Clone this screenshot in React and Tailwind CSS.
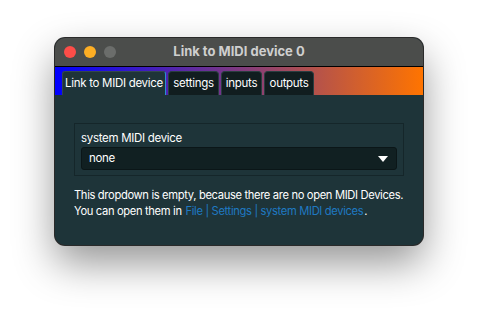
export default function App() {
  return (
    <div className="w-[479px] h-[319px] bg-white relative overflow-hidden" style={{ fontFamily: "Inter, 'Noto Sans', sans-serif" }}>
      <div className="absolute left-[55px] top-[38px] w-[368px] h-[207px] rounded-[10px] overflow-hidden flex flex-col bg-[#1e3439] shadow-[0_18px_40px_rgba(0,0,0,0.42)] ring-1 ring-[#2a2a2a]">
        <div className="h-[28px] bg-[#4b4d4b] flex items-center relative shrink-0">
          <div className="flex gap-[8px] pl-[9px]">
            <div className="w-[12px] h-[12px] rounded-full bg-[#fd4d48]" />
            <div className="w-[12px] h-[12px] rounded-full bg-[#fdae24]" />
            <div className="w-[12px] h-[12px] rounded-full bg-[#6b6d6b]" />
          </div>
          <div className="absolute inset-0 flex items-center justify-center text-[13px] font-bold text-[#cfcfcf]">Link to MIDI device 0</div>
        </div>
        <div className="h-px bg-black shrink-0" />
        <div className="h-[28px] shrink-0 bg-[linear-gradient(to_right,#0000ff,#ff7400)] flex items-end pl-[7px] gap-[2px] text-[11.5px] tracking-[-0.3px] text-white">
          <div className="w-[104px] h-[24px] flex items-center justify-center bg-[#1e3439] rounded-t-[3px] border-t border-l border-[#33484c] border-r border-r-[#2a8fd0]">Link to MIDI device</div>
          <div className="w-[51px] h-[24px] flex items-center justify-center bg-[#111d1f] rounded-t-[4px] border border-b-0 border-[#2a3d40]">settings</div>
          <div className="w-[41px] h-[24px] flex items-center justify-center bg-[#111d1f] rounded-t-[4px] border border-b-0 border-[#2a3d40]">inputs</div>
          <div className="w-[50px] h-[24px] flex items-center justify-center bg-[#111d1f] rounded-t-[4px] border border-b-0 border-[#2a3d40]">outputs</div>
        </div>
        <div className="flex-1 px-[19px] pt-[28px]">
          <div className="border border-[#15262a] px-[6px] pt-[6px] pb-[5px]">
            <div className="text-[11.5px] tracking-[-0.3px] text-white leading-[16px]">system MIDI device</div>
            <div className="mt-[1px] h-[23px] rounded-[3px] bg-[#112022] border border-[#0b1618] flex items-center justify-between pl-[7px] pr-[8px]">
              <span className="text-[11.5px] tracking-[-0.3px] text-white">none</span>
              <svg width="10" height="6" viewBox="0 0 10 6"><path d="M0 0H10L5 6Z" fill="#ffffff" /></svg>
            </div>
          </div>
          <div className="mt-[11px] text-[11.2px] leading-[16px] text-white tracking-[-0.35px] whitespace-nowrap">
            <div>This dropdown is empty, because there are no open MIDI Devices.</div>
            <div>You can open them in <span className="text-[#1f79c2] px-[1px]">File | Settings | system MIDI devices</span>.</div>
          </div>
        </div>
      </div>
    </div>
  );
}
